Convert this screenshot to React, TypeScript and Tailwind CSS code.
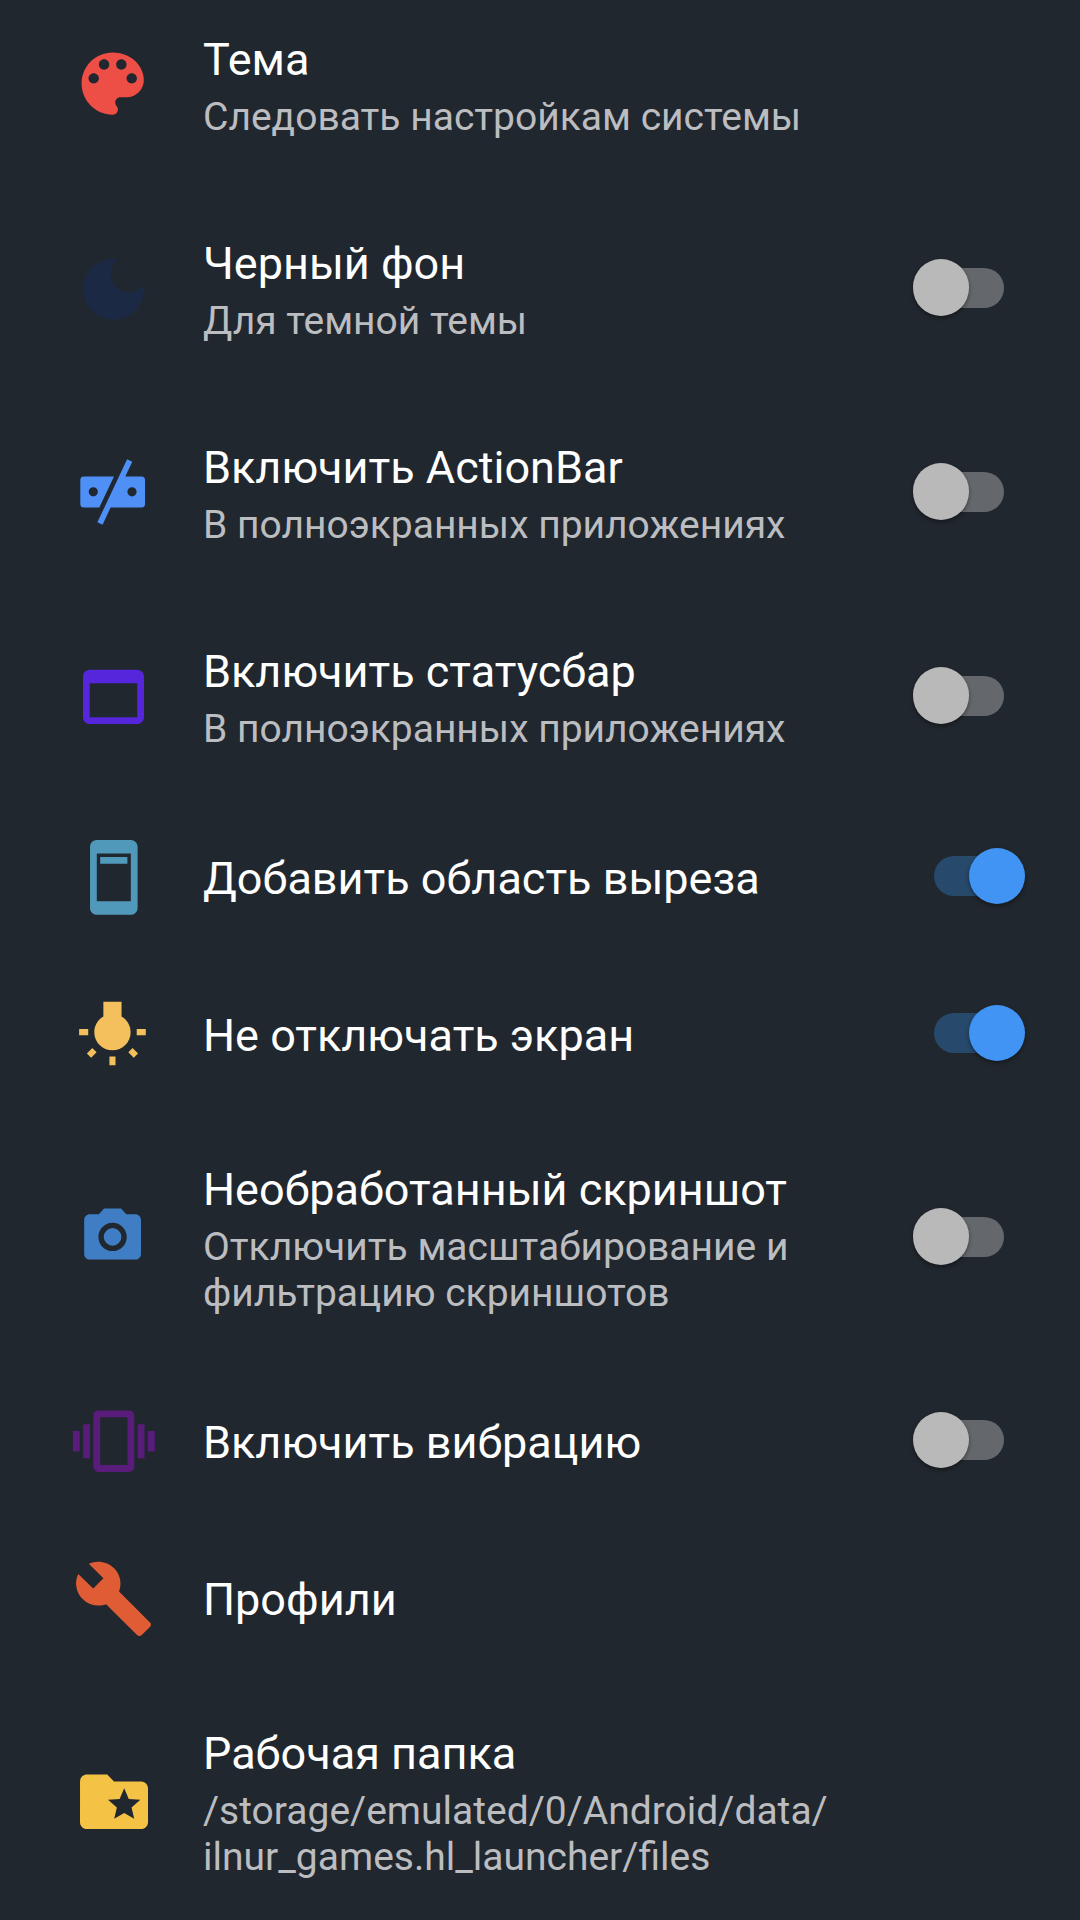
import type { ReactNode } from 'react';

type Row = {
  title: string;
  lines?: string[];
  icon: ReactNode;
  toggle?: boolean;
};

const rows: Row[] = [
  {
    title: 'Тема',
    lines: ['Следовать настройкам системы'],
    icon: (
      <path
        className="fill-[#ed4e45]"
        transform="translate(7.2 6) scale(3.46)"
        d="M12 3c-4.97 0-9 4.03-9 9s4.03 9 9 9c.83 0 1.5-.67 1.5-1.5 0-.39-.15-.74-.39-1.01-.23-.26-.38-.61-.38-.99 0-.83.67-1.5 1.5-1.5H16c2.76 0 5-2.24 5-5 0-4.42-4.03-8-9-8zm-5.5 9c-.83 0-1.5-.67-1.5-1.5S5.67 9 6.5 9 8 9.67 8 10.5 7.33 12 6.5 12zm3-4C8.67 8 8 7.33 8 6.5S8.67 5 9.5 5s1.5.67 1.5 1.5S10.33 8 9.5 8zm5 0c-.83 0-1.5-.67-1.5-1.5S13.67 5 14.5 5s1.5.67 1.5 1.5S15.33 8 14.5 8zm3 4c-.83 0-1.5-.67-1.5-1.5S16.67 9 17.5 9s1.5.67 1.5 1.5-.67 1.5-1.5 1.5z"
      />
    ),
  },
  {
    title: 'Черный фон',
    lines: ['Для темной темы'],
    toggle: false,
    icon: (
      <path
        className="fill-[#1b2945]"
        transform="translate(9 8.6) scale(3.39)"
        d="M12 3c-4.97 0-9 4.03-9 9s4.03 9 9 9 9-4.03 9-9c0-.46-.04-.92-.1-1.36-.98 1.37-2.58 2.26-4.4 2.26-2.98 0-5.4-2.42-5.4-5.4 0-1.81.89-3.42 2.26-4.4C12.92 3.04 12.46 3 12 3z"
      />
    ),
  },
  {
    title: 'Включить ActionBar',
    lines: ['В полноэкранных приложениях'],
    toggle: false,
    icon: (
      <g className="fill-[#4e90f5]">
        <path
          fillRule="evenodd"
          d="M19.8 32.5H50L35.3 63.5H19.8a3.5 3.5 0 0 1-3.5-3.5V36a3.5 3.5 0 0 1 3.5-3.5zM29.3 43.2a4.6 4.6 0 1 0 0 9.2 4.6 4.6 0 0 0 0-9.2z"
        />
        <path
          fillRule="evenodd"
          d="M63.1 15.3l5.2 2.4-7 14.8h16.2a3.5 3.5 0 0 1 3.5 3.5v24a3.5 3.5 0 0 1-3.5 3.5H46.6L38.6 80.8l-5.2-2.5zM68 43.2a4.6 4.6 0 1 0 0 9.2 4.6 4.6 0 0 0 0-9.2z"
        />
      </g>
    ),
  },
  {
    title: 'Включить статусбар',
    lines: ['В полноэкранных приложениях'],
    toggle: false,
    icon: (
      <path
        className="fill-[#5626dc]"
        transform="translate(8.8 8.2) scale(3.39)"
        d="M19 4H5c-1.11 0-2 .9-2 2v12c0 1.1.89 2 2 2h14c1.1 0 2-.9 2-2V6c0-1.1-.89-2-2-2zm0 14H5V8h14v10z"
      />
    ),
  },
  {
    title: 'Добавить область выреза',
    toggle: true,
    icon: (
      <path
        className="fill-[#5199bb]"
        transform="translate(9 8.6) scale(3.4)"
        d="M17 1.01L7 1c-1.1 0-1.99.9-1.99 2v18c0 1.1.89 2 1.99 2h10c1.1 0 2-.9 2-2V3c0-1.1-.9-1.99-2-1.99zM17 19H7V5h10v14zM8 6h8v2H8z"
        fillRule="evenodd"
      />
    ),
  },
  {
    title: 'Не отключать экран',
    toggle: true,
    icon: (
      <path
        className="fill-[#f4bf5d]"
        transform="translate(12.1 12.3) scale(3.03)"
        d="M3.55 18.54l1.41 1.41 1.8-1.79-1.41-1.41-1.8 1.79zM11 22.45h2V19.5h-2v2.95zM4 10.5H1v2h3v-2zm11-4.19V1.5H9v4.81C7.21 7.35 6 9.28 6 11.5c0 3.31 2.69 6 6 6s6-2.69 6-6c0-2.22-1.21-4.15-3-5.19zm5 4.19v2h3v-2h-3zm-2.76 7.66l1.79 1.8 1.41-1.41-1.8-1.79-1.4 1.4z"
      />
    ),
  },
  {
    title: 'Необработанный скриншот',
    lines: ['Отключить масштабирование и', 'фильтрацию скриншотов'],
    toggle: false,
    icon: (
      <g className="fill-[#3f7ec5]" transform="translate(14.5 13.8) scale(2.84)">
        <circle cx="12" cy="12" r="3.1" />
        <path d="M9 2L7.17 4H4c-1.1 0-2 .9-2 2v12c0 1.1.9 2 2 2h16c1.1 0 2-.9 2-2V6c0-1.1-.9-2-2-2h-3.17L15 2H9zm3 15c-2.76 0-5-2.24-5-5s2.24-5 5-5 5 2.24 5 5-2.24 5-5 5z" />
      </g>
    ),
  },
  {
    title: 'Включить вибрацию',
    toggle: false,
    icon: (
      <path
        className="fill-[#591c7a]"
        transform="translate(8.9 8.3) scale(3.41)"
        d="M0 15h2V9H0v6zm3 2h2V7H3v10zm19-8v6h2V9h-2zm-3 8h2V7h-2v10zM16.5 3h-9C6.67 3 6 3.67 6 4.5v15c0 .83.67 1.5 1.5 1.5h9c.83 0 1.5-.67 1.5-1.5v-15c0-.83-.67-1.5-1.5-1.5zM16 19H8V5h8v14z"
      />
    ),
  },
  {
    title: 'Профили',
    icon: (
      <path
        className="fill-[#e05c35]"
        transform="translate(8.8 8.9) scale(3.4)"
        d="M22.7 19l-9.1-9.1c.9-2.3.4-5-1.5-6.9-2-2-5-2.4-7.4-1.3L9 6 6 9 1.6 4.7C.4 7.1.9 10.1 2.9 12.1c1.9 1.9 4.6 2.4 6.9 1.5l9.1 9.1c.4.4 1 .4 1.4 0l2.3-2.3c.5-.4.5-1.1.1-1.4z"
      />
    ),
  },
  {
    title: 'Рабочая папка',
    lines: ['/storage/emulated/0/Android/data/', 'ilnur_games.hl_launcher/files'],
    icon: (
      <path
        className="fill-[#f4c244]"
        transform="translate(9.2 8) scale(3.4)"
        d="M20 6h-8l-2-2H4c-1.1 0-1.99.9-1.99 2L2 18c0 1.1.9 2 2 2h16c1.1 0 2-.9 2-2V8c0-1.1-.9-2-2-2zm-2.06 11L15 15.28 12.06 17l.78-3.33-2.59-2.24 3.41-.29L15 8l1.34 3.14 3.41.29-2.59 2.24.78 3.33z"
      />
    ),
  },
];

function Toggle({ on }: { on: boolean }) {
  return (
    <div
      role="switch"
      aria-checked={on}
      className={`flex h-10 w-[70px] shrink-0 items-center rounded-full ${
        on ? 'justify-end bg-[#26496c]' : 'justify-start bg-[#64686c]'
      }`}
    >
      <div
        className={`size-[56.5px] shrink-0 rounded-full shadow-[0_2px_4px_rgba(0,0,0,0.4)] ${
          on ? '-mr-[21.3px] bg-[#4194f3]' : '-ml-[21.3px] bg-[#b9b9b9]'
        }`}
      />
    </div>
  );
}

function SettingRow({ title, lines, icon, toggle }: Row) {
  const height = !lines ? 'h-[157px]' : lines.length === 1 ? 'h-[204px]' : 'h-[250px]';
  return (
    <div className={`flex shrink-0 items-center pl-16 pr-[76px] ${height}`}>
      <svg viewBox="0 0 96 96" className="size-24 shrink-0" aria-hidden="true">
        {icon}
      </svg>
      <div className={`ml-[43px] flex-1 self-start whitespace-nowrap ${lines ? 'pt-[51px]' : 'pt-[54px]'}`}>
        <div className="text-[45px] leading-[53px] text-white">{title}</div>
        {lines && (
          <div className="mt-2 text-[39px] leading-[46px] text-[#bbbdc0]">
            {lines.map((line) => (
              <div key={line}>{line}</div>
            ))}
          </div>
        )}
      </div>
      {toggle !== undefined && <Toggle on={toggle} />}
    </div>
  );
}

export default function App() {
  return (
    <div className="h-[1920px] w-[1080px] overflow-hidden bg-[#21272e] font-['Roboto',sans-serif]">
      <div className="-mt-[18.5px] flex flex-col">
        {rows.map((row) => (
          <SettingRow key={row.title} {...row} />
        ))}
      </div>
    </div>
  );
}
